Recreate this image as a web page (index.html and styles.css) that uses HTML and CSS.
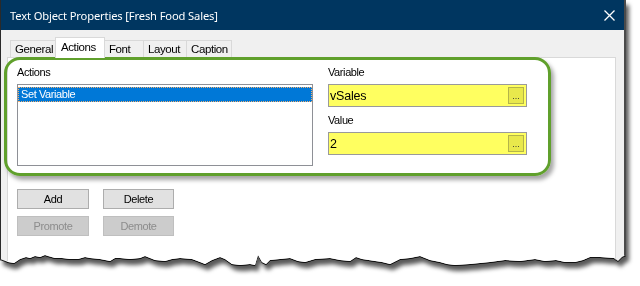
FILE: index.html
```html
<!DOCTYPE html>
<html lang="en">
<head>
<meta charset="UTF-8" />
<meta name="viewport" content="width=device-width, initial-scale=1" />
<title>Text Object Properties</title>
<link rel="stylesheet" href="styles.css">
</head>
<body>

<div class="shot">
  <div class="dialog">
    <div class="titlebar">
      <span class="title">Text Object Properties [Fresh Food Sales]</span>
      <svg class="close" width="11" height="11" viewBox="0 0 11 11">
        <path d="M0.5 0.5 L10.5 10.5 M10.5 0.5 L0.5 10.5" stroke="#fff" stroke-width="1.3" fill="none" />
      </svg>
    </div>

    <div class="tabs">
      <div class="tab">General</div>
      <div class="tab active">Actions</div>
      <div class="tab">Font</div>
      <div class="tab">Layout</div>
      <div class="tab">Caption</div>
    </div>

    <div class="panel">
      <div class="row">
        <div class="col-left">
          <div class="label">Actions</div>
          <div class="listbox">
            <div class="list-item selected">Set Variable</div>
          </div>
        </div>
        <div class="col-right">
          <div class="label">Variable</div>
          <div class="field">
            <span class="field-text">vSales</span>
            <span class="dots">...</span>
          </div>
          <div class="label label-gap">Value</div>
          <div class="field">
            <span class="field-text">2</span>
            <span class="dots">...</span>
          </div>
        </div>
      </div>

      <div class="buttons">
        <div class="btn-row">
          <button class="btn">Add</button>
          <button class="btn">Delete</button>
        </div>
        <div class="btn-row">
          <button class="btn" disabled>Promote</button>
          <button class="btn" disabled>Demote</button>
        </div>
      </div>
    </div>

    <div class="highlight"></div>
  </div>
</div>

</body>
</html>
```

FILE: styles.css
```css
body {
  margin: 0;
  background: #fff;
  width: 640px;
  height: 286px;
  overflow: hidden;
  font-family: "Liberation Sans", Arial, sans-serif;
}
.shot {
  width: 632px;
  filter: drop-shadow(0 1px 0 #111) drop-shadow(3px 5px 2px rgba(0,0,0,0.65));
}
.dialog {
  position: relative;
  width: 623px;
  height: 268px;
  background: #f0f0f0;
  border-left: 1px solid #2a2a2a;
  border-right: 2px solid #4a4a4a;
  clip-path: polygon(0 0, 626px 0, 626px 255px, 622px 257px, 618px 261px, 614px 258px, 600px 257px, 590px 257px, 583px 260px, 575px 262px, 565px 262px, 556px 260px, 545px 261px, 535px 259px, 520px 261px, 505px 260px, 490px 262px, 470px 264px, 455px 265px, 447px 264px, 440px 262px, 430px 260px, 420px 256px, 410px 258px, 400px 259px, 390px 264px, 382px 262px, 375px 261px, 362px 259px, 356px 257px, 350px 261px, 340px 260px, 330px 258px, 315px 259px, 305px 262px, 298px 261px, 290px 258px, 280px 259px, 270px 260px, 266px 264px, 262px 262px, 258px 255px, 255px 265px, 250px 264px, 240px 265px, 232px 264px, 225px 259px, 220px 257px, 212px 260px, 205px 264px, 200px 262px, 192px 259px, 180px 258px, 172px 259px, 165px 261px, 155px 260px, 150px 258px, 145px 256px, 140px 258px, 130px 259px, 120px 258px, 115px 258px, 110px 261px, 100px 259px, 90px 258px, 85px 257px, 78px 259px, 70px 259px, 62px 258px, 55px 258px, 48px 256px, 45px 255px, 40px 257px, 35px 256px, 30px 258px, 26px 257px, 20px 259px, 14px 263px, 8px 262px, 0 259px);
}
.titlebar {
  height: 30px;
  background: #003660;
  color: #fff;
  display: flex;
  align-items: center;
  justify-content: space-between;
  padding: 0 9px 0 9px;
}
.title {
  font-family: "Noto Sans", "Open Sans", sans-serif;
  font-size: 11.2px;
  letter-spacing: -0.15px;
}
.close {
  display: block;
}
.tabs {
  display: flex;
  align-items: flex-end;
  height: 20px;
  margin-top: 7px;
  padding-left: 9px;
  position: relative;
  z-index: 1;
}
.tab {
  height: 17px;
  box-sizing: border-box;
  border: 1px solid #d9d9d9;
  border-bottom: none;
  margin-right: -1px;
  font-size: 11.5px;
  letter-spacing: -0.4px;
  line-height: 16px;
  padding: 0 5px 0 4px;
  background: #f0f0f0;
  color: #000;
}
.tab:nth-child(1) { width: 46px; }
.tab:nth-child(3) { width: 40px; }
.tab:nth-child(4) { width: 44px; }
.tab:nth-child(5) { width: 46px; }
.tab.active {
  height: 21px;
  width: 50px;
  background: #fff;
  margin-bottom: -1px;
  line-height: 18px;
  padding-left: 5px;
}
.panel {
  margin-left: 6px;
  width: 609px;
  height: 230px;
  box-sizing: border-box;
  background: #fff;
  border: 1px solid #d9d9d9;
  padding: 7px 0 0 9px;
  font-size: 11px;
  letter-spacing: -0.4px;
}
.row {
  display: flex;
  gap: 15px;
}
.col-left {
  width: 296px;
}
.col-right {
  width: 199px;
}
.label {
  height: 14px;
  line-height: 14px;
  margin-bottom: 5px;
  color: #000;
}
.label-gap {
  margin-top: 6px;
}
.listbox {
  height: 82px;
  box-sizing: border-box;
  border: 1px solid #8e9096;
  padding-top: 2px;
}
.list-item {
  height: 15px;
  line-height: 13px;
  box-sizing: border-box;
  padding-left: 2px;
}
.list-item.selected {
  background: #0078d7;
  color: #fff;
  border: 1px dotted #f2b070;
}
.field {
  height: 23px;
  box-sizing: border-box;
  border: 1px solid #9a9a9a;
  background: #ffff60;
  display: flex;
  align-items: center;
  justify-content: space-between;
  padding: 0 2px 0 1px;
}
.field-text {
  font-size: 12.5px;
  letter-spacing: -0.2px;
}
.dots {
  width: 16px;
  height: 17px;
  box-sizing: border-box;
  border: 1px solid #b4b44a;
  background: #e8e84c;
  font-size: 9px;
  line-height: 17px;
  text-align: center;
  letter-spacing: 0;
  color: #333;
}
.buttons {
  margin-top: 23px;
  display: flex;
  flex-direction: column;
  gap: 7px;
}
.btn-row {
  display: flex;
  gap: 14px;
}
.btn {
  width: 72px;
  height: 20px;
  margin: 0;
  padding: 0;
  font-family: "Liberation Sans", Arial, sans-serif;
  font-size: 11px;
  letter-spacing: -0.4px;
  color: #000;
  background: #e1e1e1;
  border: 1px solid #adadad;
}
.btn:nth-child(2) {
  width: 71px;
}
.btn:disabled {
  background: #cccccc;
  border-color: #bfbfbf;
  color: #8c8c8c;
}
.highlight {
  position: absolute;
  left: 3px;
  top: 57px;
  width: 547px;
  height: 119px;
  box-sizing: border-box;
  border: 3px solid #60a02c;
  border-radius: 16px;
  box-shadow: 3px 4px 4px rgba(0,0,0,0.35);
}
```
